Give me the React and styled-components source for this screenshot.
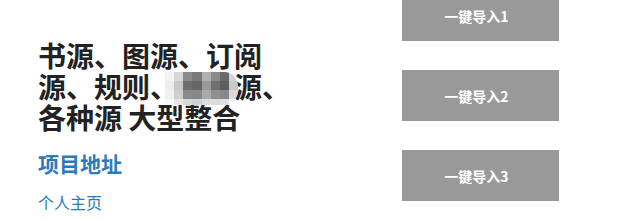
import styled, { createGlobalStyle } from 'styled-components'

const GlobalStyle = createGlobalStyle`
  html, body {
    margin: 0;
    padding: 0;
    background: #fff;
    overflow: hidden;
  }
  body {
    font-family: "Noto Sans CJK SC", "Noto Sans", sans-serif;
  }
`

const Page = styled.div`
  display: flex;
  align-items: flex-start;
  width: 634px;
  height: 219px;
`

const Intro = styled.div`
  box-sizing: border-box;
  width: 402px;
  padding: 40px 0 0 38px;
`

const Title = styled.h1`
  margin: 0;
  max-width: 262px;
  font-size: 28px;
  line-height: 31px;
  font-weight: 700;
  color: #222;
`

// blurred-out words, kept as a blank gap under the mosaic
const Hidden = styled.span`
  position: relative;
  display: inline-block;
  width: 56px;
  height: 28px;
  vertical-align: top;
`

const Mosaic = styled.span`
  position: absolute;
  left: -13px;
  top: 1px;
  width: 73px;
  height: 33px;
  display: grid;
  grid-template-columns: repeat(8, 1fr);
  grid-template-rows: 9px 9px 9px 6px;
  border-radius: 0 14px 14px 0;
  overflow: hidden;
`

const Cell = styled.span`
  background: ${props => props.color};
`

const ProjectLink = styled.a`
  display: block;
  margin-top: 16px;
  font-size: 21px;
  line-height: 28px;
  font-weight: 700;
  color: #2a7bba;
  text-decoration: none;
`

const HomeLink = styled.a`
  display: block;
  margin-top: 14px;
  font-size: 16px;
  line-height: 22px;
  color: #2a7bba;
  text-decoration: none;
`

const Actions = styled.div`
  display: flex;
  flex-direction: column;
  gap: 29px;
  margin-top: -10px;
`

const ImportButton = styled.button`
  width: 157px;
  height: 51px;
  border: none;
  padding: 0 8px 0 0;
  background: #999999;
  color: #fff;
  font-family: inherit;
  font-size: 14px;
  font-weight: 700;
  cursor: pointer;
`

const mosaicColors = [
  '#f4f4f4', '#d8d8d8', '#8a8a8a', '#7a7a7a', '#b0b0b0', '#8a8a8a', '#6a6a6a', '#d4d4d4',
  '#eeeeee', '#c8c8c8', '#6e6e6e', '#666666', '#999999', '#707070', '#5e5e5e', '#c8c8c8',
  '#f0f0f0', '#cfcfcf', '#8a8a8a', '#888888', '#aaaaaa', '#909090', '#888888', '#dadada',
  '#f8f8f8', '#e6e6e6', '#d8d8d8', '#d0d0d0', '#dddddd', '#dcdcdc', '#e0e0e0', '#f6f6f6',
]

const App = () => {
  return (
    <>
      <GlobalStyle />
      <Page>
        <Intro>
          <Title>
            书源、图源、订阅源、规则、
            <Hidden>
              <Mosaic>
                {mosaicColors.map((c, i) => <Cell key={i} color={c} />)}
              </Mosaic>
            </Hidden>
            源、各种源 大型整合
          </Title>
          <ProjectLink href="#">项目地址</ProjectLink>
          <HomeLink href="#">个人主页</HomeLink>
        </Intro>
        <Actions>
          {[1, 2, 3].map(n => (
            <ImportButton key={n}>一键导入{n}</ImportButton>
          ))}
        </Actions>
      </Page>
    </>
  )
}

export default App
